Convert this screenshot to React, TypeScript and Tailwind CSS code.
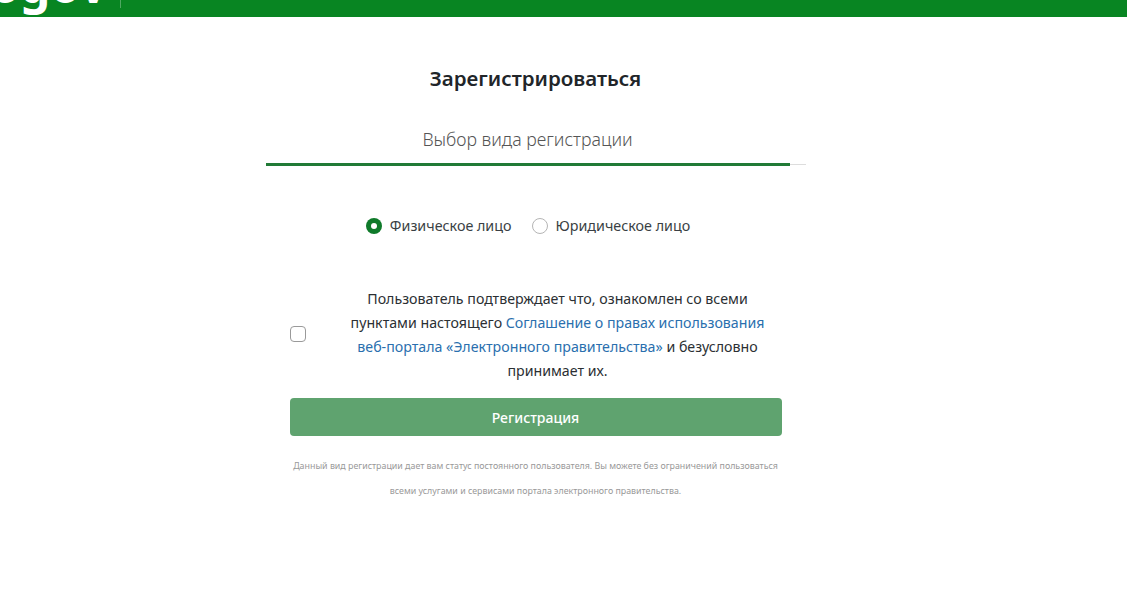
import React from "react";

const font = "font-['Noto_Sans',sans-serif]";

function Logo() {
  return (
    <div className="flex h-[17px] items-start overflow-hidden bg-[#088522]">
      <span className="mt-[-44px] ml-[-10px] text-[48px] leading-[58px] font-bold text-white">
        ogov
      </span>
      <div className="ml-[13px] h-[8px] w-px bg-[#4fa862]" />
    </div>
  );
}

function Radio({ checked, label }: { checked?: boolean; label: string }) {
  return (
    <label className="flex items-center gap-[8px]">
      {checked ? (
        <span className="flex h-4 w-4 items-center justify-center rounded-full bg-[#0f7a2a]">
          <span className="h-[6px] w-[6px] rounded-full bg-white" />
        </span>
      ) : (
        <span className="h-4 w-4 rounded-full border border-[#b5b5b5] bg-white" />
      )}
      <span className="text-[14.3px] text-[#3a3f44]">{label}</span>
    </label>
  );
}

export default function App() {
  return (
    <div className={`${font} h-[589px] overflow-hidden bg-white`}>
      <Logo />
      <div className="mx-auto flex w-[540px] -translate-x-[28px] flex-col">
        <h1 className="mt-[45px] text-center text-[20.5px] leading-[32px] font-semibold text-[#212529]">
          Зарегистрироваться
        </h1>
        <div className="mt-[32px] pr-[16px] text-center text-[17.7px] leading-[26px] font-light text-[#555]">
          Выбор вида регистрации
        </div>
        <div className="mt-[11px] flex items-center">
          <div className="h-[3px] w-[524px] bg-[#217a36]" />
          <div className="h-px flex-1 bg-[#ddd]" />
        </div>
        <div className="mt-[49px] flex justify-center gap-[20px] pr-[15px]">
          <Radio checked label="Физическое лицо" />
          <Radio label="Юридическое лицо" />
        </div>
        <div className="mx-[24px] mt-[51px] flex items-center">
          <span className="mt-[-2px] h-4 w-4 shrink-0 rounded-[4px] border border-[#9a9a9a] bg-white" />
          <p className="flex-1 pr-[9px] pl-[37px] text-center text-[14.2px] leading-[24px] text-[#2b2f33]">
            Пользователь подтверждает что, ознакомлен со всеми пунктами настоящего{" "}
            <a className="text-[#2a6fae]">Соглашение о правах использования веб-портала «Электронного правительства»</a>{" "}
            и безусловно принимает их.
          </p>
        </div>
        <button className="mx-[24px] mt-[15px] h-[38px] rounded-[4px] bg-[#5fa36f] text-[14px] font-medium text-white">
          Регистрация
        </button>
        <p className="mx-[22px] mt-[18px] text-center text-[8.85px] leading-[25px] text-[#999]">
          Данный вид регистрации дает вам статус постоянного пользователя. Вы можете без ограничений пользоваться всеми услугами и сервисами портала электронного правительства.
        </p>
      </div>
    </div>
  );
}
